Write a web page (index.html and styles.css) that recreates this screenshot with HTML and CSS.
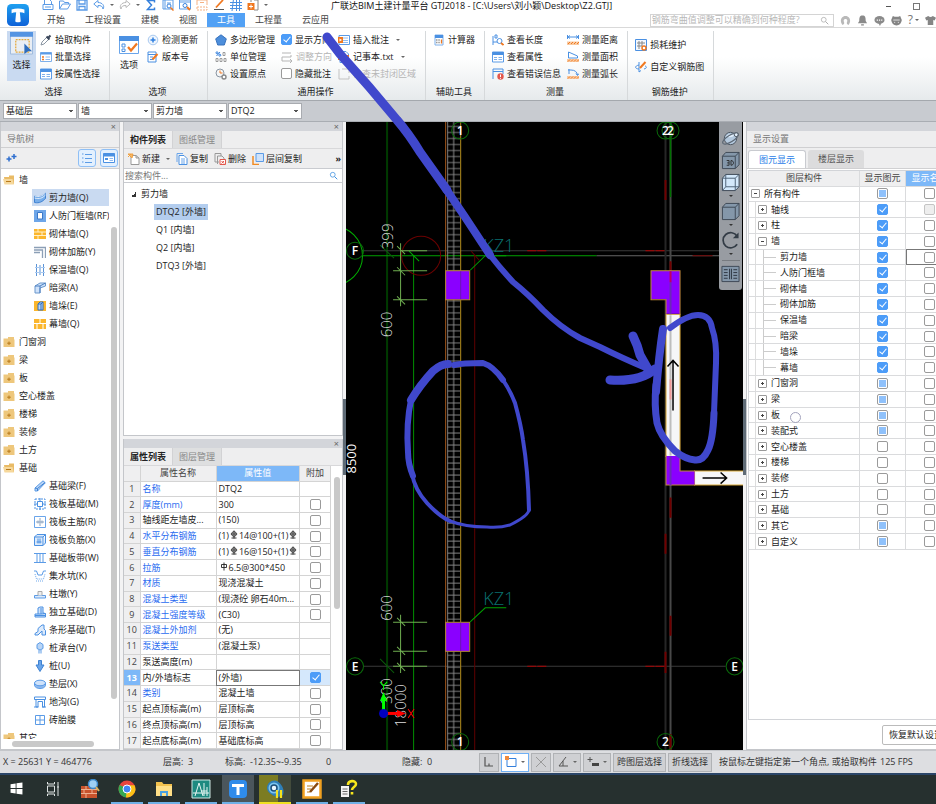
FILE: index.html
```html
<!DOCTYPE html>
<html lang="zh-CN">
<head>
  <meta charset="UTF-8" />
  <meta name="viewport" content="width=device-width, initial-scale=1.0"/>
  <title>广联达BIM土建计量平台 GTJ2018</title>
  <link rel="stylesheet" href="styles.css">
</head>
<body>

<!-- Icon sprite -->
<svg class="sprite" aria-hidden="true">
  <defs>
    <linearGradient id="gLogo" x1="0" y1="0" x2="0" y2="1"><stop offset="0" stop-color="#1ea0f0"/><stop offset="1" stop-color="#0f62d8"/></linearGradient>
  </defs>
  <!-- quick access -->
  <symbol id="i-new" viewBox="0 0 12 12"><path d="M2.500 5V.5h5l2 2V5M1 5.500h10v5H1zM3 8h6" fill="none" stroke="#5b9be6"/></symbol>
  <symbol id="i-open" viewBox="0 0 12 12"><path d="M.5 10V2h4l1 1.500h4V5M.5 10l3-5h8l-3 5z" fill="none" stroke="#5b9be6"/></symbol>
  <symbol id="i-save" viewBox="0 0 12 12"><path d="M1 1h10v10H1zM3 1v4h6V1M3 11V7.500h6V11" fill="none" stroke="#5b9be6" stroke-width="1.300"/></symbol>
  <symbol id="i-undo" viewBox="0 0 12 12"><path d="M5 1.500L.8 5 5 8.500V6.500c3 0 4.500.5 5 3.500 2-3-.5-6.500-5-6.500z" fill="none" stroke="#5b9be6"/></symbol>
  <symbol id="i-redo" viewBox="0 0 12 12"><path d="M7 1.500L11.200 5 7 8.500V6.500c-3 0-4.500.5-5 3.500-2-3 .5-6.500 5-6.500z" fill="none" stroke="#b8b8b8"/></symbol>
  <symbol id="i-sum" viewBox="0 0 12 12"><path d="M9.500 3.500V1.500H2.500L6.500 6l-4 4.500h7v-2" fill="none" stroke="#3580dc" stroke-width="1.500"/></symbol>
  <symbol id="i-find" viewBox="0 0 12 12"><path d="M1 1h10v9H1zM3 1v9M5 4h4" fill="none" stroke="#5b9be6"/><circle cx="7" cy="7" r="2" fill="#fff" stroke="#3580dc"/><path d="M8.500 8.500L11.500 11.500" stroke="#f07820" stroke-width="1.500"/></symbol>
  <symbol id="i-tabfind" viewBox="0 0 12 12"><path d="M.5 1h11v9H.5zM.5 3h11" fill="none" stroke="#5b9be6"/><circle cx="6" cy="6.500" r="2" fill="#fff" stroke="#3580dc"/><path d="M8 8l3 3" stroke="#f07820" stroke-width="2"/></symbol>
  <symbol id="i-sheet" viewBox="0 0 12 12"><path d="M1 6V1h10v5M4 3.500h4" fill="none" stroke="#f5b183"/><path d="M1 8h10v3H1z" fill="none" stroke="#f5b183" stroke-dasharray="2 1"/></symbol>
  <symbol id="i-pen" viewBox="0 0 12 12"><path d="M3 8.500L10 1" stroke="#f07820" stroke-width="1.800"/><path d="M1 10.500h10" stroke="#555"/></symbol>
  <symbol id="i-grid" viewBox="0 0 12 12"><path d="M0 3.500h12M0 6.500h12M0 9.500h12M3.500 0L2 12M6.500 0v12M9.500 0v12" stroke="#4a90e2" fill="none"/></symbol>
  <symbol id="i-add" viewBox="0 0 12 12"><path d="M7 1h4v10H7M4 3V1" fill="none" stroke="#888"/><path d="M.5 4h7v7h-7z" fill="#f07820"/><path d="M2 7.500h4M4 5.500v4" stroke="#fff"/></symbol>
  <!-- ribbon -->
  <symbol id="i-pick" viewBox="0 0 12 12"><path d="M1 11l1-3 5-5 2 2-5 5z" fill="none" stroke="#8a95a2"/><path d="M6.500 2.500l3 3M8 4l2.500-2.500" stroke="#39465a" stroke-width="2"/></symbol>
  <symbol id="i-list" viewBox="0 0 12 12"><path d="M.5 1.500h11v9H.5z" fill="#fff" stroke="#7fb0ea"/><path d="M.5 1.500h11v2H.5z" fill="#5b9be6"/><path d="M2 6h2M2 8.500h2" stroke="#f07820" stroke-width="1.500"/><path d="M5.500 6H10M5.500 8.500H10" stroke="#8fbaf0"/></symbol>
  <symbol id="i-prop" viewBox="0 0 12 12"><path d="M.5 1h11v10H.5z" fill="#fff" stroke="#5b9be6"/><path d="M.5 1h11v3H.5z" fill="#4a90e2"/><path d="M2 6.500h3M2 8.500h3M6.500 6.500H10M6.500 8.500H10" stroke="#7fb0ea"/></symbol>
  <symbol id="i-select" viewBox="0 0 24 24"><path d="M.5 1h23v22H.5z" fill="#e9eef5" stroke="#9db9dc"/><path d="M0 0h24v5H0z" fill="#5594e2"/><path d="M6 8h14v13H6z" fill="none" stroke="#e5a93a" stroke-width="1.300" stroke-dasharray="2 1"/><path d="M15 12l8 8h-4l-4 3z" fill="#2f6dbd"/></symbol>
  <symbol id="i-option" viewBox="0 0 20 18"><path d="M.5.500h19v17H.5z" fill="#fff" stroke="#6aa5ea"/><path d="M0 0h20v5H0z" fill="#4a90e2"/><path d="M3 8h3v3H3zM3 13h3v2.500H3z" fill="none" stroke="#4a90e2"/><path d="M9 11l3 3.500 6-7" fill="none" stroke="#f07820" stroke-width="2.200"/></symbol>
  <symbol id="i-update" viewBox="0 0 12 12"><circle cx="6" cy="6" r="4.800" fill="#eef5fd" stroke="#a9c9f0"/><path d="M6 3.500v5M3.500 6h5" stroke="#2f7fe0" stroke-width="1.500"/></symbol>
  <symbol id="i-version" viewBox="0 0 12 12"><path d="M1 1h8v10H1zM1 3.500h8M3 6h3M3 8.500h3" fill="none" stroke="#4a90e2"/><path d="M5.500 8.500l5-5.500" stroke="#f07820" stroke-width="2"/></symbol>
  <symbol id="i-poly" viewBox="0 0 12 12"><path d="M6 .8l5.300 4-2 6.200H2.700L.7 4.800z" fill="#4d8edb" stroke="#3872bd"/></symbol>
  <symbol id="i-unit" viewBox="0 0 12 12"><path d="M1.500 5L5 1" stroke="#3580dc"/><circle cx="2" cy="1.800" r="1" fill="none" stroke="#3580dc"/><circle cx="4.800" cy="4.200" r="1" fill="none" stroke="#3580dc"/><path d="M8 1.500h2v3H8zM1 7.500h2v3H1zM5 7.500h2v3H5zM9 7.500h2v3H9z" fill="none" stroke="#888" stroke-width=".8"/></symbol>
  <symbol id="i-origin" viewBox="0 0 12 12"><circle cx="5" cy="5" r="4" fill="none" stroke="#8a95a2"/><path d="M5 2.500V5h2.500" stroke="#f07820" fill="none"/><circle cx="9" cy="9" r="2" fill="#fff" stroke="#888" stroke-width="1.400"/></symbol>
  <symbol id="i-adjust" viewBox="0 0 12 12"><path d="M1 2h9M1 6h9V4M1 6v4h10M9 8l2 2-2 2" fill="none" stroke="#b5b5b5"/></symbol>
  <symbol id="i-note" viewBox="0 0 12 12"><path d="M1 1.500h10.500v9H1z" fill="#fff" stroke="#5b9be6"/><path d="M5 4h5M5 6.500h5M5 8.500h5" stroke="#8fbaf0"/><path d="M0 3h5v6H0z" fill="#f07820"/><path d="M1.500 4.500L4 6 1.500 7.500z" fill="#fff"/></symbol>
  <symbol id="i-txt" viewBox="0 0 12 12"><path d="M2 .5h6l2.500 2.500V11.500H2z" fill="#fff" stroke="#5b9be6"/><path d="M0 4h11v5H0z" fill="#f07820"/><path d="M1.500 5.500h2M2.500 5.500V8M5 5.500L7 8M7 5.500L5 8M8 5.500h2M9 5.500V8" stroke="#fff" stroke-width=".7"/></symbol>
  <symbol id="i-region" viewBox="0 0 12 12"><path d="M1 1v10h10V8M4 1h7v4" fill="none" stroke="#c3c3c3"/></symbol>
  <symbol id="i-calc" viewBox="0 0 12 12"><path d="M2 1h8v10H2z" fill="#fff" stroke="#7fb0ea"/><path d="M2 1h8v3H2z" fill="#4a90e2"/><path d="M3 6h1.500M5.300 6h1.500M3 8.500h1.500M5.300 8.500h1.500" stroke="#999" stroke-width="1.300"/><path d="M8.500 5.500V9.500" stroke="#f07820" stroke-width="1.300"/></symbol>
  <symbol id="i-len" viewBox="0 0 12 12"><path d="M1 2v9M1 8h4M3 1h2v3H3z" fill="none" stroke="#4a90e2"/><circle cx="7.500" cy="7" r="2.500" fill="#fff" stroke="#4a90e2"/><path d="M9 9l2.500 2" stroke="#f07820" stroke-width="1.800"/></symbol>
  <symbol id="i-err" viewBox="0 0 12 12"><path d="M1 11V1h10v5M1 3.500h10" fill="none" stroke="#4a90e2"/><circle cx="8.500" cy="8.500" r="3.200" fill="#e2574c"/><path d="M8.500 6.500v2.600M8.500 10v.8" stroke="#fff"/></symbol>
  <symbol id="i-dist" viewBox="0 0 12 12"><path d="M.5 1v4M11.500 1v4M1 3h10M3 1.500L1 3l2 1.500M9 1.500L11 3 9 4.500" fill="none" stroke="#4a90e2"/><path d="M0 7.500h12v3.500H0z" fill="#f8c9a0"/><path d="M1 10l2-2M4 10l2-2M7 10l2-2M10 10l2-2" stroke="#f07820"/></symbol>
  <symbol id="i-area" viewBox="0 0 12 12"><path d="M1.500 7V1l9 4v2z" fill="none" stroke="#4a90e2"/><path d="M0 8h12v3H0z" fill="#f8c9a0"/><path d="M1 10.500l2-2M4 10.500l2-2M7 10.500l2-2M10 10.500l2-2" stroke="#f07820"/></symbol>
  <symbol id="i-arc" viewBox="0 0 12 12"><path d="M1 2h3c4 0 6 2 6.500 5M9 5.500L10.500 7.500 12 5.500M2 1v5" fill="none" stroke="#4a90e2"/><path d="M0 8h12v3H0z" fill="#f8c9a0"/><path d="M1 10.500l2-2M4 10.500l2-2M7 10.500l2-2M10 10.500l2-2" stroke="#f07820"/></symbol>
  <symbol id="i-loss" viewBox="0 0 12 12"><path d="M.5.500h11v11H.5z" fill="#f3f8fe" stroke="#4a90e2"/><path d="M2 4h8M2 7h5M4 2v8M7 2v5" stroke="#888"/><circle cx="9" cy="9" r="2" fill="#fff" stroke="#f07820" stroke-width="1.500"/></symbol>
  <symbol id="i-rebar" viewBox="0 0 12 12"><path d="M4 4C-1 5 0 8 4 8M9 8c4-1 2-3 1-3M4 1v10l2-1.500" fill="none" stroke="#4a90e2"/><path d="M5 7l5.500-6" stroke="#f07820" stroke-width="2"/></symbol>
  <!-- header right -->
  <symbol id="i-search" viewBox="0 0 12 12"><circle cx="5" cy="5" r="3.200" fill="none" stroke="currentColor"/><path d="M7.500 7.500L11 11" stroke="currentColor" stroke-width="1.300"/></symbol>
  <symbol id="i-user" viewBox="0 0 12 12"><path d="M3 11C-.5 8 .5 1 6 1s6.500 7 3 10l-1.500-1.500V8C10 3 2 3 4.500 8v1.500z" fill="#b9b9b9"/></symbol>
  <symbol id="i-bell" viewBox="0 0 12 12"><path d="M6 .5c3 0 3.500 2 3.500 6L11 9H1l1.500-2.500C2.500 2.500 3 .5 6 .5zM4.500 10h3v1.500h-3z" fill="#8a8a8a"/></symbol>
  <symbol id="i-chat" viewBox="0 0 12 12"><ellipse cx="6" cy="5.500" rx="5.500" ry="4.300" fill="#8a8a8a"/><path d="M5 9l1.500 3L8 9z" fill="#8a8a8a"/><path d="M3 5.500h1.300M5.400 5.500h1.300M7.800 5.500h1.300" stroke="#fff" stroke-width="1.300"/></symbol>
  <symbol id="i-face" viewBox="0 0 12 12"><path d="M2 1l2 1h4l2-1 1.800 4.500Q11 11 6 11.500 1 11 .2 5.500z" fill="#858585"/><path d="M2.500 5.500h7" stroke="#fff" stroke-width=".8"/><path d="M4 7.500v1M8 7.500v1" stroke="#fff"/></symbol>
  <symbol id="i-shirt" viewBox="0 0 12 12"><path d="M3.500 1Q6 3.500 8.500 1L12 3l-1.500 3L9 5.500V11H3V5.500L1.500 6 0 3z" fill="#858585"/></symbol>
  <!-- panels -->
  <symbol id="i-folder" viewBox="0 0 12 12"><path d="M.5 2.500h4.500V1h6v2.500h.5V11H.5z" fill="#eec77c"/><path d="M6 5.500v3.500M4.200 7.200h3.600" stroke="#b87a1c"/></symbol>
  <symbol id="i-folder-open" viewBox="0 0 12 12"><path d="M1 3h5V1.500h5V10H2z" fill="#e9bb66"/><path d="M0 5h9.500l1.500 5.500H1.500z" fill="#f6d89c"/><path d="M3 7.500h5" stroke="#b87a1c"/></symbol>
  <symbol id="i-plus2" viewBox="0 0 12 12"><path d="M4 4.500v5M1.500 7h5M9 2v5M6.500 4.500h5" stroke="#2f6fd0" stroke-width="1.500"/></symbol>
  <symbol id="i-rows" viewBox="0 0 12 12"><path d="M1 2h1.500M1 6h1.500M1 10h1.500M4 2.500h7M4 6.500h7M4 10.500h7" stroke="#5b9be6"/></symbol>
  <symbol id="i-card" viewBox="0 0 12 12"><path d="M.5 1.500h11v9H.5z" fill="#fff" stroke="#4a90e2"/><path d="M.5 1.500h11v3H.5zM2 6h3v2H2z" fill="#4a90e2"/><path d="M6.500 6.500H10M6.500 8.500H10" stroke="#8fbaf0"/></symbol>
  <symbol id="i-create" viewBox="0 0 12 12"><path d="M3 2.500h5l3 2.500v6.500H3zM8 2.500V5h3" fill="#fff" stroke="#999"/><path d="M0 1l5 0-1 4zM0 4l3-3" fill="#f6b868" stroke="#f0a040"/></symbol>
  <symbol id="i-copy" viewBox="0 0 12 12"><path d="M1 9V.5h6" fill="none" stroke="#6aa5ea"/><path d="M3 2.500h5l3 3v6H3z" fill="#fff" stroke="#4a90e2"/><path d="M5 6h4M5 8h4M5 10h4" stroke="#6aa5ea"/></symbol>
  <symbol id="i-del" viewBox="0 0 12 12"><path d="M5 9H1V.5h6V3M3.500 11V3H8l2 2v1" fill="none" stroke="#999"/><path d="M6 6.500h5.500v5H6z" fill="#fff" stroke="#e2574c"/><path d="M7.500 8l2.500 2.500M10 8l-2.500 2.500" stroke="#e2574c"/></symbol>
  <symbol id="i-layer" viewBox="0 0 12 12"><path d="M4 .5h7.500v8H4z" fill="#cfe2fa" stroke="#5b9be6"/><path d="M1 3v8.500h6" fill="none" stroke="#f08a24" stroke-width="1.500"/></symbol>
  <!-- navigation tree -->
  <symbol id="n-shear" viewBox="0 0 12 12"><path d="M.5 4c5 1.500 8 0 11-3v5.500c-3 3-6 5-11 4z" fill="#78aeea" stroke="#3f82d2"/><path d="M.5 4c5 1.500 8 0 11-3M.5 6c5 1.500 8 0 11-3" stroke="#dcebfb" fill="none"/></symbol>
  <symbol id="n-frame" viewBox="0 0 12 12"><path d="M0 0h12v12H0z" fill="#6ea6e8"/><path d="M3.500 2.500h5v6.500h-5z" fill="#fff" stroke="#3a78c8"/></symbol>
  <symbol id="n-brick" viewBox="0 0 12 12"><path d="M0 1h12v10H0z" fill="#fbb62c"/><path d="M0 4h12M0 7.500h12M4 1v3M8 4v3.500M4 7.500V11" stroke="#fff0c8"/></symbol>
  <symbol id="n-rebar" viewBox="0 0 12 12"><path d="M0 1.500h11.500V12M0 4h8.500v8M0 6.500h6" fill="none" stroke="#8c9fb6" stroke-width="1.300"/></symbol>
  <symbol id="n-insul" viewBox="0 0 12 12"><path d="M2.500 0v12M9.500 0v12M6 1v10" stroke="#5b93d6"/><path d="M1 3.500h10M1 8.500h10" stroke="#a9c9f0"/></symbol>
  <symbol id="n-hidden" viewBox="0 0 12 12"><path d="M1 4l5-3h5.500v3L6 6v5H1z" fill="#cfe2fa" stroke="#6a97cc"/><path d="M1 4h5l5.500-3M6 4v7" fill="none" stroke="#4a7fc0"/></symbol>
  <symbol id="n-stack" viewBox="0 0 12 12"><path d="M0 1h12v10H0z" fill="#fbb62c"/><path d="M4 4l2-2h3v8H4z" fill="#bcd8f8" stroke="#2f6fbf"/><path d="M4 4h3v6M7 4l2-2" stroke="#2f6fbf" fill="none"/></symbol>
  <symbol id="n-curtain" viewBox="0 0 12 12"><path d="M0 1h12v10H0z" fill="#fbb62c"/><path d="M0 5.500h12M6 1v4.500M3 5.500V11M9 5.500V11" stroke="#fff"/></symbol>
  <symbol id="n-fbeam" viewBox="0 0 12 12"><path d="M1 8L9 .8l2.300 2L3.500 11H1z" fill="#b9d5f6" stroke="#5b9be6"/><path d="M1 8l2.500.5V11M3.500 8.500L11 2.500" fill="none" stroke="#3f82d2"/></symbol>
  <symbol id="n-raft" viewBox="0 0 12 12"><path d="M1 1h10v10H1z" fill="none" stroke="#4a90e2" stroke-dasharray="2 1"/><path d="M3.500 3.500h5v5h-5z" fill="none" stroke="#4a90e2"/><path d="M6 0v3M6 9v3M0 6h3M9 6h3" stroke="#4a90e2"/></symbol>
  <symbol id="n-main" viewBox="0 0 12 12"><path d="M.5.500h11v11H.5z" fill="none" stroke="#6aa5ea"/><path d="M2 6h8M6 2v8M4 4.500v3M8 4.500v3" stroke="#8ba3bf"/></symbol>
  <symbol id="n-neg" viewBox="0 0 12 12"><path d="M.5 3h8.500v8.500H.5zM.5 3L3 .5h8.500L9 3M11.500.5V9L9 11.500M2.500 8h5M4 4.500v5M6 4.500v5" fill="#dceafb" stroke="#4a90e2"/></symbol>
  <symbol id="n-strip" viewBox="0 0 12 12"><path d="M0 1.500h12M0 10.500h12M3 1.500v9M6 1.500v9M9 1.500v9" stroke="#5b9be6"/></symbol>
  <symbol id="n-pit" viewBox="0 0 12 12"><path d="M0 1h2.500L4 5h4l1.500-4H12" fill="none" stroke="#5b9be6"/><path d="M1 4l1.500 5h7L11 4M2 11h8" fill="none" stroke="#6aa5ea" stroke-dasharray="1 1"/></symbol>
  <symbol id="n-pier" viewBox="0 0 12 12"><path d="M.5 7.500h11V10H.5z" fill="#dceafb" stroke="#5b9be6"/><path d="M4 7.500v-4h4v4" fill="#eee" stroke="#aaa"/></symbol>
  <symbol id="n-indep" viewBox="0 0 12 12"><path d="M1 8h3V2l2-1h3v6l2.500.5v3.500H1z" fill="#cfe2fa" stroke="#4a90e2"/><path d="M4 8h3V2M7 8l4.500-.5M1 9.500h10" fill="none" stroke="#4a90e2"/></symbol>
  <symbol id="n-bar" viewBox="0 0 12 12"><path d="M1 9.500l3-2 0-3L8 1h2v4l1.500 1.500V11H8V7L4 11H1z" fill="#dceafb" stroke="#4a90e2"/></symbol>
  <symbol id="n-cap" viewBox="0 0 12 12"><path d="M6 .5l3 2v4L6 8 3 6.500v-4z" fill="#b9d5f6" stroke="#5b9be6"/><path d="M5 8v3.500M7 8v3.500" stroke="#5b9be6"/></symbol>
  <symbol id="n-pile" viewBox="0 0 12 12"><path d="M4.500.500h3V5H10L6 11.500 2 5h2.500z" fill="#6aa5ea" stroke="#3f82d2"/></symbol>
  <symbol id="n-pad" viewBox="0 0 12 12"><path d="M.5 5v2.500c1 4 10 4 11 0V5" fill="#8fbaf0" stroke="#5b9be6"/><ellipse cx="6" cy="5" rx="5.500" ry="2.800" fill="#cfe2fa" stroke="#5b9be6"/></symbol>
  <symbol id="n-trench" viewBox="0 0 12 12"><path d="M.5 1h11v2.500H.5zM2 3.500v7.500h2V5.500h4.500V11h2V3.500M0 11h4.500M8 11h4" fill="none" stroke="#4a90e2"/></symbol>
  <symbol id="n-mold" viewBox="0 0 12 12"><path d="M1.500 1.500h9v9h-9zM6 1.500v9M1.500 6h9" fill="none" stroke="#5b9be6"/></symbol>
  <symbol id="s-steel3" viewBox="0 0 8 9"><circle cx="4" cy="4" r="2.300" stroke="#222" stroke-width=".9" fill="none"/><path d="M4 .5V8.500M.8 4h6.400M1.500 8h5" stroke="#222" stroke-width=".9" fill="none"/></symbol>
  <symbol id="s-steel1" viewBox="0 0 8 9"><path d="M4 .5V8.500M1.500 2.500h5V5.500h-5z" stroke="#222" stroke-width=".9" fill="none"/></symbol>
</svg>

<!-- Title bar and tabs -->
<header class="app-header">
  <button class="logo" aria-label="菜单">
    <svg viewBox="0 0 24 24"><rect width="24" height="24" rx="5" fill="url(#gLogo)"/><path d="M5 6q7-2 14 0v4q-2-1-5-1l1 10q-3 2-6 0l1-10q-3 0-5 1z" fill="#fff"/></svg>
  </button>
  <div class="header-rows">
    <div class="title-row">
      <div class="quick" id="quick"></div>
      <h1>广联达BIM土建计量平台 GTJ2018 - [C:\Users\刘小颖\Desktop\Z2.GTJ]</h1>
      <div class="win-buttons"><button class="min" aria-label="最小化"></button><button class="max" aria-label="最大化"></button></div>
    </div>
    <div class="tab-row">
      <nav class="tabs">
        <button>开始</button><button>工程设置</button><button>建模</button><button>视图</button><button class="active">工具</button><button>工程量</button><button>云应用</button>
      </nav>
      <div class="search">
        <input type="text" aria-label="搜索" placeholder="钢筋弯曲值调整可以精确到何种程度?">
        <svg class="ic"><use href="#i-search"/></svg>
      </div>
      <div class="tools">
        <button aria-label="用户"><svg class="ic"><use href="#i-user"/></svg></button>
        <button aria-label="通知"><svg class="ic"><use href="#i-bell"/></svg></button>
        <button aria-label="消息"><svg class="ic"><use href="#i-chat"/></svg></button>
        <button aria-label="客服"><svg class="ic"><use href="#i-face"/></svg></button>
        <button class="help">?<span class="caret"></span></button>
        <button aria-label="皮肤"><svg class="ic"><use href="#i-shirt"/></svg></button>
      </div>
    </div>
  </div>
</header>

<!-- Ribbon -->
<section class="ribbon">
  <div class="group">
    <div class="group-body">
      <button class="big active"><svg><use href="#i-select"/></svg>选择</button>
      <div class="col">
        <button class="cmd"><svg class="ic"><use href="#i-pick"/></svg>拾取构件</button>
        <button class="cmd"><svg class="ic"><use href="#i-list"/></svg>批量选择</button>
        <button class="cmd"><svg class="ic"><use href="#i-prop"/></svg>按属性选择</button>
      </div>
    </div>
    <h2>选择</h2>
  </div>
  <div class="group">
    <div class="group-body">
      <button class="big"><svg><use href="#i-option"/></svg>选项</button>
      <div class="col">
        <button class="cmd"><svg class="ic"><use href="#i-update"/></svg>检测更新</button>
        <button class="cmd"><svg class="ic"><use href="#i-version"/></svg>版本号</button>
      </div>
    </div>
    <h2>选项</h2>
  </div>
  <div class="group">
    <div class="group-body">
      <div class="col">
        <button class="cmd"><svg class="ic"><use href="#i-poly"/></svg>多边形管理</button>
        <button class="cmd"><svg class="ic"><use href="#i-unit"/></svg>单位管理</button>
        <button class="cmd"><svg class="ic"><use href="#i-origin"/></svg>设置原点</button>
      </div>
      <div class="col">
        <label class="cmd"><input type="checkbox" checked>显示方向</label>
        <button class="cmd" disabled><svg class="ic"><use href="#i-adjust"/></svg>调整方向</button>
        <label class="cmd"><input type="checkbox">隐藏批注</label>
      </div>
      <div class="col">
        <button class="cmd"><svg class="ic"><use href="#i-note"/></svg>插入批注<span class="caret"></span></button>
        <button class="cmd"><svg class="ic"><use href="#i-txt"/></svg>记事本.txt<span class="caret"></span></button>
        <button class="cmd" disabled><svg class="ic"><use href="#i-region"/></svg>检查未封闭区域</button>
      </div>
    </div>
    <h2>通用操作</h2>
  </div>
  <div class="group">
    <div class="group-body">
      <div class="col">
        <button class="cmd"><svg class="ic"><use href="#i-calc"/></svg>计算器</button>
      </div>
    </div>
    <h2>辅助工具</h2>
  </div>
  <div class="group">
    <div class="group-body">
      <div class="col">
        <button class="cmd"><svg class="ic"><use href="#i-len"/></svg>查看长度</button>
        <button class="cmd"><svg class="ic"><use href="#i-prop"/></svg>查看属性</button>
        <button class="cmd"><svg class="ic"><use href="#i-err"/></svg>查看错误信息</button>
      </div>
      <div class="col">
        <button class="cmd"><svg class="ic"><use href="#i-dist"/></svg>测量距离</button>
        <button class="cmd"><svg class="ic"><use href="#i-area"/></svg>测量面积</button>
        <button class="cmd"><svg class="ic"><use href="#i-arc"/></svg>测量弧长</button>
      </div>
    </div>
    <h2>测量</h2>
  </div>
  <div class="group">
    <div class="group-body">
      <div class="col two">
        <button class="cmd"><svg class="ic"><use href="#i-loss"/></svg>损耗维护</button>
        <button class="cmd"><svg class="ic"><use href="#i-rebar"/></svg>自定义钢筋图</button>
      </div>
    </div>
    <h2>钢筋维护</h2>
  </div>
</section>

<!-- Floor / component pickers -->
<div class="picker-bar">
  <select aria-label="楼层"><option>基础层</option></select>
  <select aria-label="类别"><option>墙</option></select>
  <select aria-label="构件类型"><option>剪力墙</option></select>
  <select aria-label="构件"><option>DTQ2</option></select>
</div>

<div class="workspace">

  <!-- Navigation tree -->
  <aside class="panel nav-panel">
    <div class="strip"><button aria-label="关闭">×</button></div>
    <h3 class="panel-title">导航树</h3>
    <div class="nav-tools">
      <button aria-label="展开"><svg class="ic"><use href="#i-plus2"/></svg></button>
      <span class="spacer"></span>
      <button class="toggle" aria-label="列表视图"><svg class="ic"><use href="#i-rows"/></svg></button>
      <button class="toggle" aria-label="卡片视图"><svg class="ic"><use href="#i-card"/></svg></button>
    </div>
    <div class="nav-body">
      <ul class="nav-tree" id="navTree"></ul>
      <div class="vbar"></div>
    </div>
    <div class="hbar-track"><div class="hbar"></div></div>
  </aside>

  <!-- Component list + properties -->
  <div class="middle">
    <section class="panel list-panel">
      <div class="strip"><button aria-label="关闭">×</button></div>
      <div class="panel-tabs"><button class="active">构件列表</button><button>图纸管理</button></div>
      <div class="list-tools">
        <button class="cmd"><svg class="ic"><use href="#i-create"/></svg>新建<span class="caret"></span></button>
        <button class="cmd"><svg class="ic"><use href="#i-copy"/></svg>复制</button>
        <button class="cmd"><svg class="ic"><use href="#i-del"/></svg>删除</button>
        <button class="cmd"><svg class="ic"><use href="#i-layer"/></svg>层间复制</button>
        <button class="more" aria-label="更多">»</button>
      </div>
      <div class="list-search">
        <input type="text" aria-label="搜索构件" placeholder="搜索构件...">
        <svg class="ic"><use href="#i-search"/></svg>
      </div>
      <ul class="comp-tree">
        <li class="root">剪力墙</li>
        <li><span class="selected">DTQ2 [外墙]</span></li>
        <li><span>Q1 [内墙]</span></li>
        <li><span>Q2 [内墙]</span></li>
        <li><span>DTQ3 [外墙]</span></li>
      </ul>
    </section>
    <section class="panel prop-panel">
      <div class="strip"><button aria-label="关闭">×</button></div>
      <div class="panel-tabs"><button class="active">属性列表</button><button>图层管理</button></div>
      <div class="prop-body">
        <table class="prop-table">
          <thead><tr><th class="num"></th><th>属性名称</th><th class="hot">属性值</th><th>附加</th></tr></thead>
          <tbody id="propRows"></tbody>
        </table>
        <div class="vbar"></div>
      </div>
    </section>
  </div>

  <!-- Drawing canvas -->
  <main class="canvas">
    <svg class="drawing" viewBox="346 122 397 627" preserveAspectRatio="xMinYMin slice">
      <defs>
        <pattern id="mesh" x="447" y="123" width="13" height="6" patternUnits="userSpaceOnUse">
          <path d="M0 3.500h13" stroke="#7c7c7c"/><path d="M.5 0v6M6.500 0v6" stroke="#8a8a8a"/>
        </pattern>
      </defs>
      <!-- axes -->
      <g fill="none">
        <path d="M387 121v628" stroke="#003a00" stroke-width="2"/>
        <path d="M362 250.500h357M364 665.500h361" stroke="#3a3a3a"/>
        <path d="M596 255.500h123" stroke="#666"/>
        <path d="M363 255.500h233" stroke="#00a000"/>
        <path d="M413.500 255v494" stroke="#009000"/>
        <path d="M665 121v628" stroke="#262626" stroke-width="2"/>
        <path d="M670 121v628" stroke="#484848" stroke-width="2"/>
        <path d="M670 121v76" stroke="#007000" stroke-width="1.500"/>
        <path d="M474.500 255v494" stroke="#600000"/>
        <circle cx="333" cy="255.500" r="29.500" stroke="#00b000"/>
        <circle cx="421" cy="255.500" r="19.500" stroke="#6a0000"/>
        <path d="M471 251l8 9" stroke="#600000"/>
        <path d="M409 251l10 10" stroke="#00b000"/>
        <path d="M380 245l14 13M380 658l14 14" stroke="#0a5a0a"/>
        <path d="M527 250.500h20M645 250.500h20M527 665.500h20M645 665.500h20" stroke="#b00000" stroke-dasharray="9 1"/>
        <path d="M692 255.500h20" stroke="#700000"/>
        <path d="M665 180v20M670 261v9M670 497v20M665 533v20M670 615v20M665 651v21M670 733v16" stroke="#700000" stroke-width="2"/>
      </g>
      <!-- wall on axis 1 -->
      <rect x="447" y="121" width="13" height="628" fill="url(#mesh)"/>
      <path d="M445.500 121v628" stroke="#a4571a"/>
      <path d="M460.500 121v628" stroke="#b08a1a"/>
      <!-- columns -->
      <g fill="#8a00ff" stroke="#b08830">
        <rect x="445.500" y="270.500" width="24" height="29"/>
        <rect x="445.500" y="621.500" width="24" height="29"/>
      </g>
      <path d="M460.500 271v28M460.500 622v28" stroke="#6a18b0"/>
      <!-- walls on axis 2 -->
      <path d="M665.500 314v142h14V314zM694 470.500h49v14h-49z" fill="#f6f6f8" stroke="#d8a838"/>
      <path d="M650.500 270.500h29v43h-14v-14.500h-15zM665.500 455.500h14v15h14.500v14h-28.500z" fill="#8a00ff"/>
      <path d="M665.500 313.500v-14h-15v-29h29v44M665.500 455v29.500h29M679.500 455v15.500h15" fill="none" stroke="#c08a38"/>
      <path d="M670 282v32M670 456v29" stroke="#6b2ab8" stroke-width="2"/>
      <path d="M670 271v11" stroke="#c00060" stroke-width="2"/>
      <path d="M670 315v140" stroke="#bdbdbd" stroke-width="2"/>
      <path d="M670 379v20" stroke="#f29a9a" stroke-width="2"/>
      <path d="M672.500 410v-50M667 366l5.500-6 5.500 6M702 477.500h24M720 472l6 5.500-6 5.500" fill="none" stroke="#000" stroke-width="1.500"/>
      <!-- dimensions -->
      <g fill="none" stroke="#6fae50">
        <path d="M400.500 243v63M400 250.500h27M393 270.500h34M393 299.500h34M397 246l8 8M397 267l8 8M397 296l8 8" />
        <path d="M400.500 614v58M393 621.500h34M393 650.500h34M393 665.500h34M397 617l8 8M397 646l8 8M397 662l8 8"/>
      </g>
      <path d="M470 270l15-14.500h21M470 621l15-14h21" fill="none" stroke="#00a000"/>
      <g class="cad-text">
        <text transform="translate(393 249) rotate(-90)">399</text>
        <text transform="translate(392 337) rotate(-90)">600</text>
        <text transform="translate(392 620) rotate(-90)">600</text>
        <text transform="translate(392 703) rotate(-90)">300</text>
        <text transform="translate(406 726) rotate(-90)">18000</text>
        <text class="small" transform="translate(356 473) rotate(-90)">8500</text>
        <text class="mark" x="483" y="252">KZ1</text>
        <text class="mark" x="483" y="604">KZ1</text>
      </g>
      <!-- axis bubbles -->
      <g fill="none" stroke="#0a6a0a">
        <circle cx="460" cy="130.500" r="8.500"/><circle cx="355" cy="250.500" r="8.500"/><circle cx="355" cy="665.500" r="8.500"/>
        <circle cx="460" cy="741" r="8.500"/><circle cx="665" cy="130.500" r="8.500"/><circle cx="670" cy="130.500" r="8.500"/>
        <circle cx="734" cy="665.500" r="8.500"/><circle cx="665" cy="741" r="8.500"/>
      </g>
      <g class="bubble-text">
        <text x="460" y="135">1</text><text x="355" y="255">F</text><text x="355" y="670">E</text><text x="460" y="745">1</text>
        <text x="665" y="135">2</text><text x="670" y="135">2</text><text x="734" y="670">E</text><text x="665" y="745">2</text>
      </g>
      <!-- UCS -->
      <path d="M383.500 712v-13" stroke="#0f0" stroke-width="3"/><path d="M380 700l3.500-9 3.500 9z" fill="#0f0"/>
      <path d="M384 712.500h15" stroke="#f00" stroke-width="3"/><path d="M397 709l9 3.500-9 3.500z" fill="#f00"/>
      <circle cx="383.500" cy="712.500" r="4.500" fill="#0000c0"/>
      <path d="M380 681l3.500 4 3.500-4M383.500 685v4" fill="none" stroke="#0f0"/>
      <path d="M408 708l6 9M414 708l-6 9" stroke="#f00"/>
    </svg>
    <div class="view-tools">
      <button aria-label="动态观察"><svg viewBox="0 0 20 20"><circle cx="10" cy="10" r="6.500" fill="#b4c9de" stroke="#4c5560"/><path d="M5 8q5-5 9-2-2 4-9 2z" fill="#e2effb"/><ellipse cx="10" cy="10" rx="9.500" ry="3.500" transform="rotate(-32 10 10)" fill="none" stroke="#5c6875" stroke-width="1.300"/><circle cx="16" cy="6" r="2" fill="#e2effb" stroke="#4c5560"/></svg></button>
      <button aria-label="三维"><svg viewBox="0 0 20 20"><path d="M1.500 5.500L5 1.500h14v13L15 18.500H1.500zM1.500 5.500H15v13M15 5.500l4-4" fill="#8497aa" stroke="#3d4854"/><path d="M6 10h2.500v5H6M6.500 12.500h2M10.500 10v5c3.500 0 3.500-5 0-5" fill="none" stroke="#222" stroke-width=".9"/></svg></button>
      <button aria-label="俯视" class="drop"><svg viewBox="0 0 20 20"><path d="M1.500 5.500L5 1.500h14v13L15 18.500H1.500z" fill="#d3e8fb" stroke="#3d4854"/><path d="M1.500 5.500H15v13M15 5.500l4-4M5 1.500v13h14M5 14.500l-3.500 4" fill="none" stroke="#4b5f74"/></svg></button>
      <button aria-label="视图样式" class="drop"><svg viewBox="0 0 20 20"><path d="M1.500 5.500L5 1.500h14v13L15 18.500H1.500zM1.500 5.500H15v13M15 5.500l4-4" fill="#8497aa" stroke="#3d4854"/></svg></button>
      <button aria-label="旋转" class="drop"><svg viewBox="0 0 20 20"><path d="M17 14a8 8 0 1 1 0-8.500" fill="none" stroke="#333c46" stroke-width="1.800"/><path d="M18.500 1.500v6h-6z" fill="#333c46"/></svg></button>
      <hr>
      <button aria-label="显示设置"><svg viewBox="0 0 20 20"><path d="M1 2.500h18v16H1z" fill="#8497aa" stroke="#3d4854"/><path d="M3 6h4M3 9h4M3 12h4M3 15h4M9 5v11M11 5v11M13 6h4M13 9h4M13 12h4M13 15h4" stroke="#2c3540"/></svg></button>
    </div>
    <span class="grip left"></span><span class="grip right"></span>
  </main>

  <!-- Display settings -->
  <aside class="panel display-panel">
    <div class="strip"></div>
    <h3 class="panel-title">显示设置</h3>
    <div class="display-tabs"><button class="active">图元显示</button><button>楼层显示</button></div>
    <div class="layer-box">
      <table class="layer-table">
        <thead><tr><th>图层构件</th><th>显示图元</th><th class="hot">显示名称</th></tr></thead>
        <tbody id="layerRows"></tbody>
      </table>
    </div>
    <button class="reset">恢复默认设置</button>
    <span class="busy-cursor"></span>
  </aside>
</div>

<!-- Status bar -->
<footer class="status">
  <span class="coords">X = 25631 Y = 464776</span>
  <span class="height">层高:&nbsp; 3</span>
  <span class="level">标高:&nbsp; -12.35~-9.35</span>
  <span class="count">0</span>
  <span class="hidden-count">隐藏:&nbsp; 0</span>
  <div class="snap">
    <button aria-label="正交"><svg class="ic"><path d="M2 1v9h8M6 10V7.500" fill="none" stroke="#555" stroke-width="1.200"/></svg></button>
    <button class="active" aria-label="捕捉"><svg class="ic"><path d="M2 2.500h9v8H2z" fill="none" stroke="#3580dc"/><path d="M0 0h4v4H0z" fill="#f08a3c"/></svg><span class="caret"></span></button>
    <button aria-label="交点"><svg class="ic"><path d="M1 1l10 10M11 1L1 11" stroke="#999"/></svg></button>
    <button aria-label="角度"><svg class="ic"><path d="M9 1L2 10h9" fill="none" stroke="#555"/><path d="M6 5v5" stroke="#555"/></svg><span class="caret"></span></button>
    <button aria-label="输入"><svg class="ic"><path d="M3 1v5M.5 3.500h5" stroke="#555"/><path d="M5 7h7v3H5z" fill="#444"/></svg><span class="caret"></span></button>
    <button>跨图层选择</button>
    <button>折线选择</button>
  </div>
  <span class="hint">按鼠标左键指定第一个角点, 或拾取构件</span>
  <span>125 FPS</span>
</footer>

<!-- Taskbar -->
<div class="taskbar">
  <button class="start" aria-label="开始"><svg viewBox="0 0 20 20"><path d="M3 5l6-1v5.500H3zM10 3.800L17 3v6.500h-7zM3 10.500h6V16l-6-1zM10 10.500h7V17l-7-.9z" fill="#fff"/></svg></button>
  <button aria-label="任务视图"><svg viewBox="0 0 20 20"><path d="M4.500 7h7v6h-7zM4.500 3v2h7V3M4.500 17v-2h7v2M15 3v14M14 8h2" fill="none" stroke="#dfe4e4"/></svg></button>
  <button aria-label="防火墙"><svg viewBox="0 0 20 20"><path d="M1 7h16v12H1z" fill="#c8532c"/><path d="M1 10.500h16M1 14.500h16M6 7v3.500M12 10.500v4M6 14.500V19M4 10.500v4" stroke="#f0b090"/><circle cx="13" cy="5" r="4.500" fill="#9fd0f4" stroke="#3a86c8" stroke-width="1.500"/><path d="M16 8l3 4" stroke="#d8b060" stroke-width="2"/></svg></button>
  <button class="open" aria-label="浏览器"><svg viewBox="0 0 20 20"><circle cx="10" cy="10" r="8.500" fill="#e8453c"/><path d="M2.500 6A8.500 8.500 0 0 0 9 18.400L13.500 11z" fill="#34a853"/><path d="M9 18.400A8.500 8.500 0 0 0 17.500 6.200H10z" fill="#fbc116"/><circle cx="10" cy="10" r="4" fill="#4285f4" stroke="#fff"/></svg></button>
  <button class="open" aria-label="资源管理器"><svg viewBox="0 0 20 20"><path d="M2 3h6l1.500 2H18v12H2z" fill="#f2c14e"/><path d="M2 7h16v10H2z" fill="#ffdf87"/><path d="M6 12h8v5h-2v-3H8v3H6z" fill="#4aa0e0"/></svg></button>
  <button class="open" aria-label="CAD"><svg viewBox="0 0 20 20"><path d="M1 1h18v18H1z" fill="#1e8a80" stroke="#cfe8e4"/><path d="M4 17l4-13 4 13M10 12h6M13 4v13M16 8v9M2 14h16" fill="none" stroke="#e6f6f3"/></svg></button>
  <button class="open current" aria-label="GTJ2018"><svg viewBox="0 0 20 20"><rect x="1" y="1" width="18" height="18" rx="4" fill="#2f8bea"/><path d="M4 5h12v3h-4.500v8h-3V8H4z" fill="#fff"/></svg></button>
  <button class="open recording" aria-label="录屏"><svg viewBox="0 0 20 20"><path d="M2 9C2 3 8 0 12 2c5 3 8 9 6 14-4 3-8 2-12-1-2-1-4-3-4-6z" fill="#2f7fb8"/><circle cx="9" cy="9" r="5.500" fill="#7cc4ee"/><circle cx="9" cy="9" r="3" fill="#eaf6fd" stroke="#1d4e78" stroke-width="1.500"/><path d="M12 11v8M16 11v8" stroke="#f5e21c" stroke-width="2.200"/></svg></button>
  <button class="open" aria-label="画板"><svg viewBox="0 0 20 20"><path d="M1.500 1.500h17v17h-17z" fill="#fff" stroke="#f0a020" stroke-width="2.500"/><path d="M5 7h6M5 10h4M5 13h3" stroke="#c08020"/><path d="M8 13l8-9" stroke="#8a4a10" stroke-width="2.500"/></svg></button>
  <button class="open" aria-label="帮助"><svg viewBox="0 0 20 20"><path d="M2 7h8v11H2z" fill="#f4f4f4"/><path d="M3.500 10h5M3.500 12.500h5M3.500 15h5" stroke="#666"/><path d="M9 6c0-5 8-5 8-1 0 3-4 3-4 6M13 13v2.500" fill="none" stroke="#f8e71c" stroke-width="2.600"/></svg></button>
</div>

<!-- Pen markup over the window -->
<svg class="markup" viewBox="0 0 936 804" preserveAspectRatio="xMinYMin meet" aria-hidden="true">
  <path stroke-width="9" d="M327 37L340 54Q370 87 397 120Q409 134 420 152L447 190"/>
  <path stroke-width="8" d="M446 189L465 217L490 255"/>
  <path stroke-width="6" d="M490 255Q500 268 513 282Q528 294 543 310Q560 327 580 338L600 347Q622 358 648 369"/>
  <path stroke-width="9" d="M633 336Q638 346 640 355L649 371M610 380Q640 382 655 369"/>
  <path stroke-width="6" d="M670 328Q687 315 698 315Q710 315 712 328Q717 342 716 363L714 413"/>
  <path stroke-width="7" d="M714 413Q713 440 708 450Q703 461 695 460Q685 459 675 451Q660 436 657 423Q654 405 656 385"/>
  <path stroke-width="8" d="M663 329Q659 355 656 392"/>
  <path stroke-width="6" d="M454 365Q462 363 483 363Q493 366 503 380"/>
  <path stroke-width="4" d="M503 380Q511 392 515 403Q521 425 523 440Q528 470 529 510"/>
  <path stroke-width="3" d="M529 510Q528 516 510 525Q500 528 487 527Q465 527 450 521"/>
  <path stroke-width="4" d="M450 521Q440 517 427 503Q415 490 412 474"/>
  <path stroke-width="6" d="M413 476Q408 464 408 452Q406 423 411 400"/>
  <path stroke-width="8" d="M411 400Q420 385 433 371Q441 364 448 364"/>
</svg>

<script src="app.js"></script>
</body>
</html>
```

FILE: styles.css
```css
* { box-sizing: border-box; }

html, body {
  margin: 0;
  height: 100%;
}

body {
  display: flex;
  flex-direction: column;
  overflow: hidden;
  font-family: "Open Sans", "Noto Sans CJK SC", sans-serif;
  font-size: 9px;
  line-height: 12px;
  color: #222;
  background: #fff;
}

button, input, select {
  font: inherit;
  color: inherit;
  margin: 0;
  padding: 0;
  border: 0;
  background: none;
}

button {
  white-space: nowrap;
  cursor: pointer;
}

button:disabled { color: #b5b5b5; }
h1, h2, h3 { margin: 0; font-size: 9px; font-weight: normal; }
ul { margin: 0; padding: 0; list-style: none; }
table { border-collapse: collapse; table-layout: fixed; }
svg { display: block; }

.sprite { position: absolute; width: 0; height: 0; }
.ic { width: 12px; height: 12px; flex: none; }

.caret {
  border: 2px solid transparent;
  border-top-color: #666;
  border-bottom: 0;
  margin-left: 4px;
  flex: none;
}

input[type="checkbox"] {
  appearance: none;
  flex: none;
  display: block;
  width: 11px;
  height: 11px;
  border: 1px solid #9a9a9a;
  border-radius: 2px;
  background: #fff;
}

input[type="checkbox"]:checked {
  border-color: #4c9cf8;
  background: #4c9cf8;
}

input[type="checkbox"]:checked::after {
  content: "";
  display: block;
  width: 3px;
  height: 6px;
  margin: 0 3px;
  border: solid #fff;
  border-width: 0 1px 1px 0;
  transform: rotate(40deg);
}

input[type="checkbox"].partial {
  padding: 1px;
  background: #8fc1fb content-box;
}

input[type="checkbox"]:disabled { background: #eee; border-color: #c4c4c4; }

/* Header */
.app-header {
  display: flex;
  height: 27px;
  flex: none;
}

.logo { width: 37px; padding: 3px 8px 0 7px; }
.logo svg { width: 22px; height: 22px; }
.header-rows { flex: 1; min-width: 0; }

.title-row {
  display: flex;
  height: 13px;
  align-items: center;
}

.quick {
  display: flex;
  flex: none;
  width: 294px;
  padding: 0 5px 3px;
  gap: 5px;
  align-items: center;
}

.quick .caret { margin: 0; }
.title-row h1 { flex: 1; padding-bottom: 1px; white-space: nowrap; color: #111; }
.win-buttons { display: flex; gap: 22px; padding-right: 16px; align-items: center; }
.min { width: 5px; height: 1px; background: #555; }
.max { width: 7px; height: 7px; border: 1px solid #777; }

.tab-row {
  display: flex;
  height: 14px;
  align-items: center;
}

.tabs { display: flex; flex: 1; }
.tabs button { height: 14px; padding: 0 10px; color: #444; }
.tabs .active { background: #52a1f5; color: #fff; }

.search {
  display: flex;
  width: 184px;
  height: 13px;
  padding-right: 4px;
  align-items: center;
  border: 1px solid #d4d4d4;
  color: #aaa;
}

.search input { flex: 1; min-width: 0; height: 11px; padding-left: 1px; outline: 0; }
.search input::placeholder { color: #b8b8b8; }
.search .ic { width: 9px; height: 9px; }

.tools {
  display: flex;
  gap: 6px;
  padding-left: 6px;
  align-items: center;
}

.tools .ic { width: 11px; height: 11px; }
.tools .help { display: flex; align-items: center; color: #777; font-size: 12px; }
.help .caret { margin-left: 2px; }

/* Ribbon */
.ribbon {
  display: flex;
  flex: none;
  height: 74px;
  padding: 3px 0 0 2px;
  border-top: 1px solid #d9d9d9;
  border-bottom: 1px solid #a4a8ad;
  background: linear-gradient(#fff 40%, #e6eaec);
}

.group {
  display: flex;
  flex-direction: column;
  flex: none;
  padding: 0 9px 0 7px;
  border-right: 1px solid #d6d9db;
}

.group:first-child { padding-left: 5px; }
.group h2 { text-align: center; line-height: 14px; }
.group-body { display: flex; gap: 6px; height: 54px; }
.group:first-child .group-body { gap: 4px; }
.col { display: flex; flex-direction: column; }
.col.two { gap: 5px; padding-top: 5px; }

.cmd {
  display: flex;
  align-items: center;
  gap: 3px;
  height: 17px;
  white-space: nowrap;
}

.big {
  display: flex;
  flex-direction: column;
  align-items: center;
  gap: 4px;
  height: 50px;
  width: 24px;
  padding-top: 4px;
}

.big svg { width: 20px; height: 20px; }
.big.active { width: 29px; padding-top: 1px; background: #c9daf1; }
.big.active svg { width: 23px; height: 23px; }

.picker-bar {
  display: flex;
  flex: none;
  gap: 1px;
  height: 20px;
  padding: 2px 3px;
  background: #c8cbd0;
}

.picker-bar select {
  appearance: none;
  width: 74px;
  height: 16px;
  padding: 0 2px;
  border: 1px solid #a8abb0;
  background: linear-gradient(#555, #555) 65px 6px / 4px 1px no-repeat,
    linear-gradient(#555, #555) 66px 7px / 2px 1px no-repeat, #fff;
}

/* Workspace */
.workspace {
  display: grid;
  grid-template-columns: 120px 220px minmax(0, 1fr) 190px;
  column-gap: 3px;
  flex: 1;
  min-height: 0;
  border-top: 1px solid #a9adb3;
  background: #f3f3f4;
}

.panel {
  display: flex;
  flex-direction: column;
  min-width: 0;
  min-height: 0;
  border: 1px solid #c4c6ca;
  border-top: 0;
  background: #fff;
}

.strip {
  height: 9px;
  flex: none;
  padding-right: 3px;
  background: #d3d5da;
}

.strip button { display: block; margin-left: auto; line-height: 9px; color: #666; }

.panel-title {
  flex: none;
  padding: 0 6px;
  line-height: 16px;
  color: #777;
  background: #eeeeef;
  border-bottom: 1px solid #cfcfd1;
}

.nav-tools {
  display: flex;
  flex: none;
  align-items: center;
  gap: 4px;
  height: 21px;
  padding: 0 1px 0 4px;
  background: #eeeeef;
  border-bottom: 1px solid #cfcfd1;
}

.spacer { flex: 1; }

.toggle {
  padding: 2px;
  border: 1px solid #8fbff5;
  border-radius: 3px;
  background: #e3f0fe;
}

.nav-body { display: flex; flex: 1; min-height: 0; gap: 2px; padding: 2px 2px 0 0; }
.nav-tree { flex: 1; min-width: 0; overflow: hidden; }

.nav-tree li {
  display: flex;
  align-items: center;
  gap: 4px;
  height: 18px;
  padding-left: 2px;
  white-space: nowrap;
}

.nav-tree .leaf { gap: 3px; margin: 0 0 1px 31px; height: 17px; }
.nav-tree .selected { background: #c9daf1; }

.vbar {
  flex: none;
  width: 6px;
  height: 472px;
  margin-top: 56px;
  border-radius: 3px;
  background: #c9c9c9;
}

.hbar-track { height: 10px; flex: none; padding: 2px 11px; }
.hbar { width: 82px; height: 6px; border-radius: 3px; background: #c9c9c9; }

.middle {
  display: flex;
  flex-direction: column;
  gap: 3px;
  min-height: 0;
}

.list-panel { flex: 1; }
.panel-tabs { display: flex; flex: none; height: 18px; background: #eeeeef; border-bottom: 1px solid #d8d8da; }
.panel-tabs button { padding: 0 6px; border-right: 1px solid #d2d2d4; color: #888; background: #dedfe0; }
.panel-tabs .active { color: #222; font-weight: bold; background: #eeeeef; }

.list-tools {
  display: flex;
  flex: none;
  align-items: center;
  gap: 6px;
  height: 19px;
  padding: 0 1px 0 4px;
  background: #eeeeef;
}

.list-tools .cmd { gap: 2px; }
.list-tools .more { margin-left: auto; font-weight: bold; }

.list-search {
  display: flex;
  flex: none;
  align-items: center;
  height: 15px;
  padding-right: 4px;
  border: solid #c9cbd0;
  border-width: 1px 0;
  color: #3a8ee0;
}

.list-search input { flex: 1; padding-left: 1px; outline: 0; }
.list-search input::placeholder { color: #777; }
.list-search .ic { width: 9px; height: 9px; }

.comp-tree { padding-top: 2px; }
.comp-tree li { display: flex; align-items: center; height: 18px; padding-left: 30px; }
.comp-tree span { padding: 2px; }
.comp-tree .selected { background: #b3cdee; }
.comp-tree .root { padding-left: 7px; gap: 5px; }

.comp-tree .root::before {
  content: "";
  width: 5px;
  height: 5px;
  background: linear-gradient(135deg, transparent 50%, #333 50%);
}

.prop-panel { flex: none; }
.prop-body { display: flex; gap: 3px; }
.prop-table { width: 207px; height: 283px; }

.prop-table th, .prop-table td {
  height: 15px;
  padding: 0 2px;
  overflow: hidden;
  white-space: nowrap;
  border: solid #d4d4d4;
  border-width: 0 1px 1px 0;
  line-height: 12px;
}

.prop-table th { font-weight: normal; color: #444; background: #efeff0; }
.prop-table th:nth-child(1) { width: 16px; padding: 0; }
.prop-table th:nth-child(2) { width: 76px; }
.prop-table th:nth-child(4) { width: 31px; }
.prop-table th.hot, .layer-table th.hot { color: #fff; background: #7db8f8; }
.prop-table .blue { color: #2a6cf0; }
.prop-table input { margin: 0 auto; }
.prop-table svg { display: inline-block; width: 8px; height: 9px; margin: 0 1px; }
.prop-table .current td:last-child { background: #d5e8fc; }
.prop-table .current td:nth-child(3) { outline: 1px solid #777; outline-offset: -1px; }
.prop-table .current th { color: #fff; font-weight: bold; background: #7db8f8; }
.prop-body .vbar { height: 132px; margin-top: 11px; }

/* Canvas */
.canvas { position: relative; min-width: 0; min-height: 0; background: #000; }
.drawing { position: absolute; width: 100%; height: 100%; }

.cad-text {
  font-family: "Liberation Sans Narrow", "Open Sans", sans-serif;
  font-size: 15px;
  font-weight: 300;
  fill: #ddd;
}

.cad-text .small { font-family: "Open Sans", sans-serif; font-size: 13px; font-weight: 400; fill: #fff; }
.cad-text .mark { font-size: 18px; fill: #0a7070; }

.bubble-text {
  font-size: 12px;
  font-weight: 600;
  text-anchor: middle;
  fill: #fff;
}

.view-tools {
  position: absolute;
  top: 0;
  right: 1px;
  display: flex;
  flex-direction: column;
  align-items: center;
  width: 23px;
  padding: 7px 2px;
  gap: 3px;
  border-radius: 0 0 3px 3px;
  background: #989ca2;
}

.view-tools svg { width: 19px; height: 19px; }

.view-tools .drop::after {
  content: "";
  display: block;
  width: 0;
  margin: 3px auto 2px;
  border: 2px solid transparent;
  border-top-color: #333;
  border-bottom: 0;
}

.view-tools hr { width: 18px; margin: 0; border: 0; border-top: 1px solid #777b80; }

.grip {
  position: absolute;
  top: 277px;
  width: 3px;
  height: 76px;
  background: #5f6b76;
}

.grip.left { left: -3px; }
.grip.right { right: -3px; }

/* Display settings */
.display-panel { position: relative; overflow: hidden; border-right: 0; }

.display-tabs {
  display: flex;
  flex: none;
  gap: 2px;
  height: 21px;
  padding: 2px 1px 0;
  background: #eeeeef;
  border-bottom: 1px solid #d0d0d2;
}

.display-tabs button { padding: 0 10px; border-radius: 3px 3px 0 0; color: #555; background: #dcdcdd; }
.display-tabs .active { color: #2a80e8; border: 1px solid #c9cbd0; border-bottom: 0; background: #fff; }
.layer-box { flex: 1; margin: 1px 0 0 1px; border: 1px solid #d2d4d8; border-right: 0; }
.layer-table { width: 205px; height: 379px; }

.layer-table th, .layer-table td {
  height: 15px;
  padding: 0;
  white-space: nowrap;
  border: solid #dadbdd;
  border-width: 0 1px 1px 0;
}

.layer-table th { font-weight: normal; color: #444; background: #efeff0; }
.layer-table th:nth-child(2) { width: 46px; }
.layer-table th:nth-child(3) { width: 48px; }
.layer-table td > input { margin: 0 auto; }
.layer-table .focus { outline: 1px solid #777; outline-offset: -1px; }
.node { display: flex; align-items: center; gap: 4px; padding-left: 2px; height: 14px; }
.depth1 .node { padding-left: 9px; }
.depth2 .node { padding-left: 15px; }
.depth2 .node::before { content: ""; width: 12px; height: 1px; background: #ccc; }
.depth1 td:first-child { background: linear-gradient(#ddd, #ddd) 6px 0 / 1px 100% no-repeat; }

.depth2 td:first-child {
  background: linear-gradient(#ddd, #ddd) 6px 0 / 1px 100% no-repeat,
    linear-gradient(#ccc, #ccc) 14px 0 / 1px 100% no-repeat;
}

.expander {
  width: 9px;
  height: 9px;
  border: 1px solid #999;
  border-radius: 1px;
  background: linear-gradient(#444, #444) 2px 3px / 3px 1px no-repeat, #fff;
}

.expander.plus {
  background: linear-gradient(#444, #444) 2px 3px / 3px 1px no-repeat,
    linear-gradient(#444, #444) 3px 2px / 1px 3px no-repeat, #fff;
}

.reset {
  align-self: flex-start;
  flex: none;
  margin: 5px 0 4px 135px;
  padding: 3px 6px;
  border: 1px solid #bbb;
  border-radius: 2px;
  background: #fff;
}

.busy-cursor {
  position: absolute;
  left: 43px;
  top: 290px;
  width: 11px;
  height: 11px;
  border: 1px solid #a3a3bd;
  border-radius: 50%;
}

/* Status bar */
.status {
  display: flex;
  flex: none;
  align-items: center;
  height: 25px;
  padding: 0 3px;
  white-space: nowrap;
  color: #333;
  background: #dddee1;
  border-top: 1px solid #c4c6ca;
  border-bottom: 2px solid #2a4568;
}

.coords { width: 160px; }
.height { width: 62px; }
.level { width: 101px; }
.count { width: 76px; }
.hidden-count { width: 77px; }
.snap { display: flex; gap: 2px; margin-right: 7px; }

.snap button {
  display: flex;
  align-items: center;
  height: 19px;
  padding: 0 3px;
  border: 1px solid #b0b2b5;
  background: #cfd0d3;
}

.snap .active { border-color: #6fb0f5; background: #fff; }
.hint { width: 158px; margin-right: 3px; overflow: hidden; }

/* Taskbar */
.taskbar {
  display: flex;
  flex: none;
  height: 29px;
  gap: 5px;
  background: #26302f;
}

.taskbar button {
  display: flex;
  align-items: center;
  justify-content: center;
  width: 32px;
  border-bottom: 2px solid transparent;
}

.taskbar svg { width: 20px; height: 20px; }
.taskbar .start svg { width: 17px; height: 17px; }
.taskbar .open { border-bottom-color: #6fb0e6; }
.taskbar .current { background: #4b565c; }
.taskbar .recording { border-bottom-color: #f0e020; background: linear-gradient(90deg, #7c7c22 60%, #434b3c 60%); }

.markup {
  position: absolute;
  top: 0;
  left: 0;
  width: 936px;
  height: 804px;
  pointer-events: none;
  fill: none;
  stroke: #4048cc;
  stroke-linecap: round;
  stroke-linejoin: round;
}
```

FILE: app.js
```js
const icon = (name) => `<svg class="ic"><use href="#${name}"/></svg>`;

// Quick access bar: "v" is a drop-down caret
const quick = ['new', 'open', 'save', 'undo', 'v', 'redo', 'v', 'sum', 'find', 'tabfind', 'sheet', 'pen', 'grid', 'add', 'v'];
document.getElementById('quick').innerHTML = quick
  .map((q) => (q === 'v' ? '<span class="caret"></span>' : icon('i-' + q)))
  .join('');

// Navigation tree: [label, icon] is a leaf, a plain string is a folder
const nav = [
  '墙', ['剪力墙(Q)', 'shear'], ['人防门框墙(RF)', 'frame'], ['砌体墙(Q)', 'brick'], ['砌体加筋(Y)', 'rebar'],
  ['保温墙(Q)', 'insul'], ['暗梁(A)', 'hidden'], ['墙垛(E)', 'stack'], ['幕墙(Q)', 'curtain'],
  '门窗洞', '梁', '板', '空心楼盖', '楼梯', '装修', '土方',
  '基础', ['基础梁(F)', 'fbeam'], ['筏板基础(M)', 'raft'], ['筏板主筋(R)', 'main'], ['筏板负筋(X)', 'neg'],
  ['基础板带(W)', 'strip'], ['集水坑(K)', 'pit'], ['柱墩(Y)', 'pier'], ['独立基础(D)', 'indep'],
  ['条形基础(T)', 'bar'], ['桩承台(V)', 'cap'], ['桩(U)', 'pile'], ['垫层(X)', 'pad'], ['地沟(G)', 'trench'],
  ['砖胎膜', 'mold'], '其它'
];
const opened = ['墙', '基础'];

document.getElementById('navTree').innerHTML = nav.map((n) => {
  if (typeof n === 'string') {
    return `<li>${icon(opened.includes(n) ? 'i-folder-open' : 'i-folder')}${n}</li>`;
  }
  return `<li class="leaf${n[1] === 'shear' ? ' selected' : ''}">${icon('n-' + n[1])}${n[0]}</li>`;
}).join('');

// Properties: [name, value, blue name, checkbox]
const S3 = '<svg><use href="#s-steel3"/></svg>';
const S1 = '<svg><use href="#s-steel1"/></svg>';
const props = [
  ['名称', 'DTQ2', 1, 0],
  ['厚度(mm)', '300', 1, 1],
  ['轴线距左墙皮...', '(150)', 0, 1],
  ['水平分布钢筋', `(1)${S3}14@100+(1)${S3}`, 1, 1],
  ['垂直分布钢筋', `(1)${S3}16@150+(1)${S3}`, 1, 1],
  ['拉筋', `${S1}6.5@300*450`, 1, 1],
  ['材质', '现浇混凝土', 1, 1],
  ['混凝土类型', '(现浇砼 卵石40m...', 1, 1],
  ['混凝土强度等级', '(C30)', 1, 1],
  ['混凝土外加剂', '(无)', 1, 0],
  ['泵送类型', '(混凝土泵)', 1, 0],
  ['泵送高度(m)', '', 0, 0],
  ['内/外墙标志', '(外墙)', 0, 2],
  ['类别', '混凝土墙', 1, 1],
  ['起点顶标高(m)', '层顶标高', 0, 1],
  ['终点顶标高(m)', '层顶标高', 0, 1],
  ['起点底标高(m)', '基础底标高', 0, 1]
];

document.getElementById('propRows').innerHTML = props.map(([name, value, blue, box], i) => `
  <tr${box === 2 ? ' class="current"' : ''}>
    <th>${i + 1}</th>
    <td${blue ? ' class="blue"' : ''}><label for="p${i}">${name}</label></td>
    <td>${value}</td>
    <td>${box ? `<input type="checkbox" id="p${i}"${box === 2 ? ' checked' : ''}>` : ''}</td>
  </tr>`).join('');

// Layers: [depth, name, state] where state is c(hecked), p(artial) or empty
const layers = [
  [0, '所有构件', 'p'], [1, '轴线', 'c'], [1, '柱', 'c'], [1, '墙', 'c'],
  [2, '剪力墙', 'c'], [2, '人防门框墙', 'c'], [2, '砌体墙', 'c'], [2, '砌体加筋', 'c'],
  [2, '保温墙', 'c'], [2, '暗梁', 'c'], [2, '墙垛', 'c'], [2, '幕墙', 'c'],
  [1, '门窗洞', 'p'], [1, '梁', 'p'], [1, '板', 'p'], [1, '装配式', 'p'],
  [1, '空心楼盖', ''], [1, '楼梯', ''], [1, '装修', ''], [1, '土方', ''], [1, '基础', ''],
  [1, '其它', 'p'], [1, '自定义', 'p']
];

document.getElementById('layerRows').innerHTML = layers.map(([depth, name, state], i) => {
  const open = name === '所有构件' || name === '墙';
  const expander = depth < 2 ? `<button class="expander${open ? '' : ' plus'}" aria-label="展开 ${name}"></button>` : '';
  const attr = state === 'c' ? ' checked' : state === 'p' ? ' class="partial"' : '';
  return `
  <tr class="depth${depth}">
    <td><div class="node">${expander}<label for="l${i}">${name}</label></div></td>
    <td><input type="checkbox" id="l${i}"${attr}></td>
    <td${name === '剪力墙' ? ' class="focus"' : ''}><input type="checkbox" aria-label="显示名称 ${name}"${name === '轴线' ? ' disabled' : ''}></td>
  </tr>`;
}).join('');
```
